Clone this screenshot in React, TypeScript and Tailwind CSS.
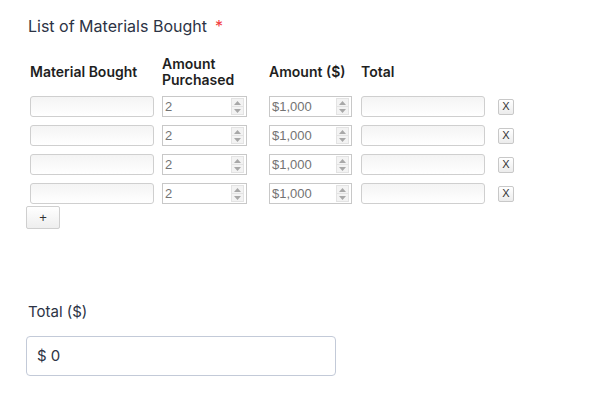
import React from "react";

const Spinner = () => (
  <div className="flex flex-col w-[13px] h-[17px] mr-[2px] border border-[#e3e3e3] bg-[#f3f3f3]">
    <div className="flex-1 flex items-center justify-center border-b border-[#e3e3e3]">
      <svg width="7" height="4" viewBox="0 0 7 4"><path d="M0 4 L3.5 0 L7 4 Z" fill="#a8a8a8" /></svg>
    </div>
    <div className="flex-1 flex items-center justify-center">
      <svg width="7" height="4" viewBox="0 0 7 4"><path d="M0 0 L3.5 4 L7 0 Z" fill="#a8a8a8" /></svg>
    </div>
  </div>
);

const NumBox = ({ value, w }: { value: string; w: string }) => (
  <div className={`flex items-center h-[21px] border border-[#c8c8c8] bg-white ${w}`}>
    <span className="flex-1 pl-[2px] text-[13px] leading-none text-[#737373]" style={{ fontFamily: '"Liberation Sans", Arial, sans-serif' }}>
      {value}
    </span>
    <Spinner />
  </div>
);

const TextBox = ({ w }: { w: string }) => (
  <div className={`h-[21px] rounded-[3px] border border-[#cfcfcf] bg-gradient-to-b from-[#f4f4f4] to-white ${w}`} />
);

export default function App() {
  const rows = [0, 1, 2, 3];
  return (
    <div className="w-[597px] h-[411px] bg-white pt-[16px] pl-[28px]" style={{ fontFamily: 'Inter, "Noto Sans", sans-serif' }}>
      <div className="text-[16px] leading-[21px] text-[#2c3345]">
        List of Materials Bought<span className="text-[#f23a3c] ml-[8px]">*</span>
      </div>
      <div className="mt-[18px] pl-[2px]">
        <div className="flex items-center h-[34px] text-[14px] font-semibold text-[#1f1f1f] leading-[16px]">
          <div className="w-[132px]">Material Bought</div>
          <div className="w-[107px]">Amount<br />Purchased</div>
          <div className="w-[92px]">Amount ($)</div>
          <div>Total</div>
        </div>
        <div className="mt-[7px] flex flex-col gap-[8px]">
          {rows.map((r) => (
            <div key={r} className="flex items-center">
              <TextBox w="w-[124px]" />
              <div className="w-[8px]" />
              <NumBox value="2" w="w-[85px]" />
              <div className="w-[22px]" />
              <NumBox value="$1,000" w="w-[83px]" />
              <div className="w-[9px]" />
              <TextBox w="w-[124px]" />
              <div className="w-[13px]" />
              <button className="w-[16px] h-[16px] flex items-center justify-center rounded-[2px] border border-[#c8c8c8] bg-gradient-to-b from-white to-[#ececec] text-[11px] leading-none text-[#333]" style={{ fontFamily: '"Liberation Sans", Arial, sans-serif' }}>
                X
              </button>
            </div>
          ))}
        </div>
        <button className="mt-[2px] -ml-[4px] w-[34px] h-[23px] flex items-center justify-center rounded-[2px] border border-[#cfcfcf] bg-gradient-to-b from-white to-[#eeeeee] text-[13px] leading-none text-[#333]" style={{ fontFamily: '"Liberation Sans", Arial, sans-serif' }}>
          +
        </button>
      </div>
      <div className="mt-[73px] text-[15px] leading-[20px] text-[#2c3345]">Total ($)</div>
      <div className="mt-[14px] -ml-[2px] w-[310px] h-[40px] flex items-center pl-[10px] rounded-[4px] border border-[#c3cad8] text-[15px] text-[#2c3345]">
        $ 0
      </div>
    </div>
  );
}
